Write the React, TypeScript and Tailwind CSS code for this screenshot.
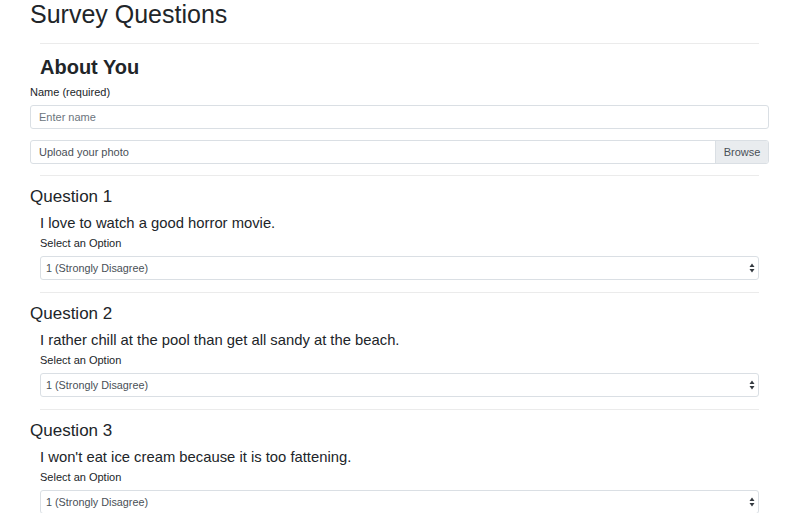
import { useState } from 'react';

const questions = [
  { id: 1, text: 'I love to watch a good horror movie.' },
  { id: 2, text: 'I rather chill at the pool than get all sandy at the beach.' },
  { id: 3, text: "I won't eat ice cream because it is too fattening." },
];

const options = [
  '1 (Strongly Disagree)',
  '2 (Disagree)',
  '3 (Neutral)',
  '4 (Agree)',
  '5 (Strongly Agree)',
];

function SelectArrows() {
  return (
    <svg width="6" height="10" viewBox="0 0 6 10" className="pointer-events-none absolute right-[4px] top-[7px]">
      <path d="M3 0.5 L5.5 4 H0.5 Z" fill="#343a40" />
      <path d="M3 9.5 L5.5 6 H0.5 Z" fill="#343a40" />
    </svg>
  );
}

function Question({ id, text }: { id: number; text: string }) {
  const [value, setValue] = useState(options[0]);
  return (
    <div>
      <h3 className="mt-[11px] text-[17px] leading-[20px] text-[#212529]">Question {id}</h3>
      <div className="px-[10px]">
        <p className="mt-[7px] text-[14.8px] leading-[18px] text-[#212529]">{text}</p>
        <label className="mt-[4px] block text-[11px] leading-[14px] text-[#212529]">Select an Option</label>
        <div className="relative mt-[6px]">
          <select
            value={value}
            onChange={(e) => setValue(e.target.value)}
            className="block h-[24px] w-full appearance-none rounded-[3px] border border-[#dadfe4] bg-white pl-[5px] pr-[16px] text-[10.8px] text-[#495057] outline-none"
          >
            {options.map((o) => (
              <option key={o}>{o}</option>
            ))}
          </select>
          <SelectArrows />
        </div>
        <hr className="mt-[12px] border-0 border-t border-[#ebebeb]" />
      </div>
    </div>
  );
}

export default function App() {
  const [name, setName] = useState('');

  return (
    <div className="min-h-screen bg-white font-['Liberation_Sans',Arial,sans-serif] text-[#212529]">
      <div className="mx-[30px] w-[739px] pb-6">
        <h1 className="text-[25px] leading-[28px]">Survey Questions</h1>
        <hr className="mx-[10px] mt-[15px] border-0 border-t border-[#ebebeb]" />

        <h2 className="mt-[11px] px-[10px] text-[20px] font-bold leading-[24px]">About You</h2>
        <label className="mt-[6px] block text-[11px] leading-[14px]">Name (required)</label>
        <input
          value={name}
          onChange={(e) => setName(e.target.value)}
          placeholder="Enter name"
          className="mt-[6px] block h-[24px] w-full rounded-[3px] border border-[#dadfe4] px-[8px] text-[11px] text-[#495057] outline-none placeholder:text-[#6c757d]"
        />

        <label className="mt-[11px] flex h-[24px] w-full cursor-pointer overflow-hidden rounded-[3px] border border-[#dadfe4] text-[11px] text-[#495057]">
          <input type="file" className="hidden" />
          <span className="flex flex-1 items-center px-[8px]">Upload your photo</span>
          <span className="flex w-[53px] items-center justify-center border-l border-[#dadfe4] bg-[#e9ecef]">Browse</span>
        </label>
        <hr className="mx-[10px] mt-[11px] border-0 border-t border-[#ebebeb]" />

        {questions.map((q) => (
          <Question key={q.id} id={q.id} text={q.text} />
        ))}
      </div>
    </div>
  );
}
